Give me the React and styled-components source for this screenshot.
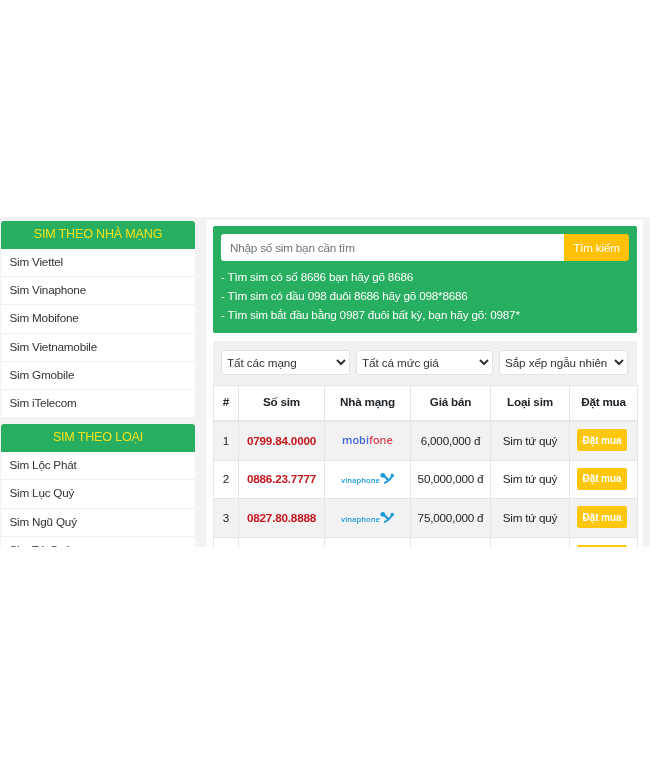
import React from 'react'
import styled, { createGlobalStyle } from 'styled-components'

const GlobalStyle = createGlobalStyle`
  body {
    margin: 0;
    background: #fff;
    font-family: "Liberation Sans", Arial, sans-serif;
    color: #212529;
  }
`

const Frame = styled.div`
  margin-top: 217px;
  height: 330px;
  overflow: hidden;
  background: #f3f3f3;
  display: flex;
  align-items: flex-start;
  letter-spacing: -0.2px;
  filter: blur(0.4px);
`
const Sidebar = styled.aside`
  width: 194px;
  margin: 4px 0 0 1px;
  display: flex;
  flex-direction: column;
  gap: 6px;
`
const Group = styled.div`
  background: #fff;
`
const GroupTitle = styled.h3`
  margin: 0;
  height: 28px;
  line-height: 26px;
  background: #27ae60;
  border-radius: 3px 3px 0 0;
  color: #f5e21c;
  font-size: 12.6px;
  font-weight: 400;
  text-align: center;
  text-transform: uppercase;
`
const GroupItem = styled.a`
  display: block;
  height: 27.2px;
  line-height: 25.5px;
  padding-left: 8.5px;
  font-size: 11.7px;
  color: #333;
  border-bottom: 1px solid #f1f1f1;
`
const Main = styled.main`
  width: 424px;
  margin: 3px 0 0 12px;
  padding: 6px 6px 0;
  background: #fff;
`
const SearchBox = styled.section`
  height: 107px;
  box-sizing: border-box;
  padding: 8px;
  background: #27ae60;
  border-radius: 2px;
`
const SearchRow = styled.div`
  display: flex;
  height: 27px;
  margin-bottom: 6px;
`
const SearchInput = styled.input`
  flex: 1;
  min-width: 0;
  box-sizing: border-box;
  padding: 0 9px;
  border: 0;
  border-radius: 3px 0 0 3px;
  background: #fff;
  font: 11.7px "Liberation Sans", Arial, sans-serif;
  letter-spacing: -0.2px;
  &::placeholder {
    color: #6c757d;
    opacity: 1;
  }
`
const SearchButton = styled.button`
  width: 65px;
  border: 0;
  border-radius: 0 3px 3px 0;
  background: #ffc107;
  color: #fff;
  font: 11.7px "Liberation Sans", Arial, sans-serif;
  letter-spacing: -0.2px;
  padding: 0;
`
const Hint = styled.p`
  margin: 0;
  color: #fff;
  font-size: 11.7px;
  line-height: 19px;
`
const Filters = styled.div`
  margin-top: 8px;
  height: 44px;
  box-sizing: border-box;
  padding: 9px 9px 0 8px;
  background: #f1f1f1;
  display: grid;
  grid-template-columns: 129px 137px 129px;
  gap: 6px;
`
const FilterSelect = styled.select`
  height: 25px;
  padding: 0 1px;
  border: 1px solid #e2e2e2;
  border-radius: 3px;
  background: #fff;
  color: #333;
  font: 11.7px "Liberation Sans", Arial, sans-serif;
  letter-spacing: -0.1px;
`
const SimTable = styled.table`
  width: 424px;
  table-layout: fixed;
  border-collapse: collapse;
  font-size: 11.7px;
`
const HeadCell = styled.th`
  height: 31px;
  padding: 0 0 3px;
  border: 1px solid #e4e6e8;
  border-bottom-width: 2px;
  font-weight: 700;
  text-align: center;
`
const Row = styled.tr`
  background: ${(p) => (p.$odd ? '#f2f2f2' : '#fff')};
`
const Cell = styled.td`
  height: 36.6px;
  padding: 0 0 1px;
  border: 1px solid #e4e6e8;
  text-align: center;
`
const SimNumber = styled(Cell)`
  color: #c5161d;
  font-weight: 700;
`
const BuyButton = styled.button`
  width: 50px;
  height: 22px;
  margin-right: 3px;
  padding: 0;
  border: 0;
  border-radius: 2px;
  background: #ffc70b;
  color: #fff;
  font: 700 10px "Liberation Sans", Arial, sans-serif;
  letter-spacing: -0.1px;
  vertical-align: middle;
`
const Mobifone = styled.span`
  font-family: "Open Sans", sans-serif;
  font-size: 10.5px;
  font-weight: 600;
  letter-spacing: 0;
  color: #3f66d8;
  display: inline-block;
  transform: scaleX(1.04);
  em {
    font-style: normal;
    color: #e4434f;
  }
`
const Vinaphone = styled.span`
  display: inline-flex;
  align-items: flex-end;
  justify-content: center;
  font-family: "Open Sans", sans-serif;
  font-size: 7.6px;
  font-weight: 600;
  letter-spacing: 0;
  line-height: 9px;
  color: #1c9ad6;
`

const VinaMark = () => (
  <svg width="14" height="13" viewBox="0 0 16 13">
    <path d="M4 3.2 C6 5 8 6.4 9 8.2" fill="none" stroke="#1c9ad6" strokeWidth="2.6" strokeLinecap="round" />
    <path d="M14 3.6 C12.5 6 11 9 5.5 11.6" fill="none" stroke="#1c9ad6" strokeWidth="2.2" strokeLinecap="round" />
    <circle cx="3.2" cy="2.8" r="2.7" fill="#1c9ad6" />
    <circle cx="14" cy="3" r="2" fill="#1c9ad6" />
  </svg>
)

const networks = ['Sim Viettel', 'Sim Vinaphone', 'Sim Mobifone', 'Sim Vietnamobile', 'Sim Gmobile', 'Sim iTelecom']
const types = ['Sim Lộc Phát', 'Sim Lục Quý', 'Sim Ngũ Quý', 'Sim Tứ Quý']

const sims = [
  { id: 1, number: '0799.84.0000', net: 'mobifone', price: '6,000,000 đ' },
  { id: 2, number: '0886.23.7777', net: 'vinaphone', price: '50,000,000 đ' },
  { id: 3, number: '0827.80.8888', net: 'vinaphone', price: '75,000,000 đ' },
]

const columns = [
  ['#', 25],
  ['Số sim', 86],
  ['Nhà mạng', 86],
  ['Giá bán', 80],
  ['Loại sim', 79],
  ['Đặt mua', 68],
]

const App = () => {
  return (
    <>
      <GlobalStyle />
      <Frame>
        <Sidebar>
          <Group>
            <GroupTitle>Sim theo nhà mạng</GroupTitle>
            {networks.map((n) => <GroupItem key={n}>{n}</GroupItem>)}
          </Group>
          <Group>
            <GroupTitle>Sim theo loại</GroupTitle>
            {types.map((n) => <GroupItem key={n}>{n}</GroupItem>)}
          </Group>
        </Sidebar>
        <Main>
          <SearchBox>
            <SearchRow>
              <SearchInput placeholder="Nhập số sim bạn cần tìm" />
              <SearchButton>Tìm kiếm</SearchButton>
            </SearchRow>
            <Hint>- Tìm sim có số 8686 bạn hãy gõ 8686</Hint>
            <Hint>- Tìm sim có đầu 098 đuôi 8686 hãy gõ 098*8686</Hint>
            <Hint>- Tìm sim bắt đầu bằng 0987 đuôi bất kỳ, bạn hãy gõ: 0987*</Hint>
          </SearchBox>
          <Filters>
            <FilterSelect><option>Tất các mạng</option></FilterSelect>
            <FilterSelect><option>Tất cá mức giá</option></FilterSelect>
            <FilterSelect><option>Sắp xếp ngẫu nhiên</option></FilterSelect>
          </Filters>
          <SimTable>
            <colgroup>
              {columns.map(([name, w]) => <col key={name} width={w} />)}
            </colgroup>
            <thead>
              <tr>
                {columns.map(([name]) => <HeadCell key={name}>{name}</HeadCell>)}
              </tr>
            </thead>
            <tbody>
              {sims.map((s) => (
                <Row key={s.id} $odd={s.id % 2 === 1}>
                  <Cell>{s.id}</Cell>
                  <SimNumber>{s.number}</SimNumber>
                  <Cell>
                    {s.net === 'mobifone'
                      ? <Mobifone>mobi<em>fone</em></Mobifone>
                      : <Vinaphone>vinaphone<VinaMark /></Vinaphone>}
                  </Cell>
                  <Cell>{s.price}</Cell>
                  <Cell>Sim tứ quý</Cell>
                  <Cell><BuyButton>Đặt mua</BuyButton></Cell>
                </Row>
              ))}
              {/* the fourth row is cut off by the frame, only its button top shows */}
              <Row>
                <Cell /><Cell /><Cell /><Cell /><Cell />
                <Cell><BuyButton>Đặt mua</BuyButton></Cell>
              </Row>
            </tbody>
          </SimTable>
        </Main>
      </Frame>
    </>
  )
}

export default App
